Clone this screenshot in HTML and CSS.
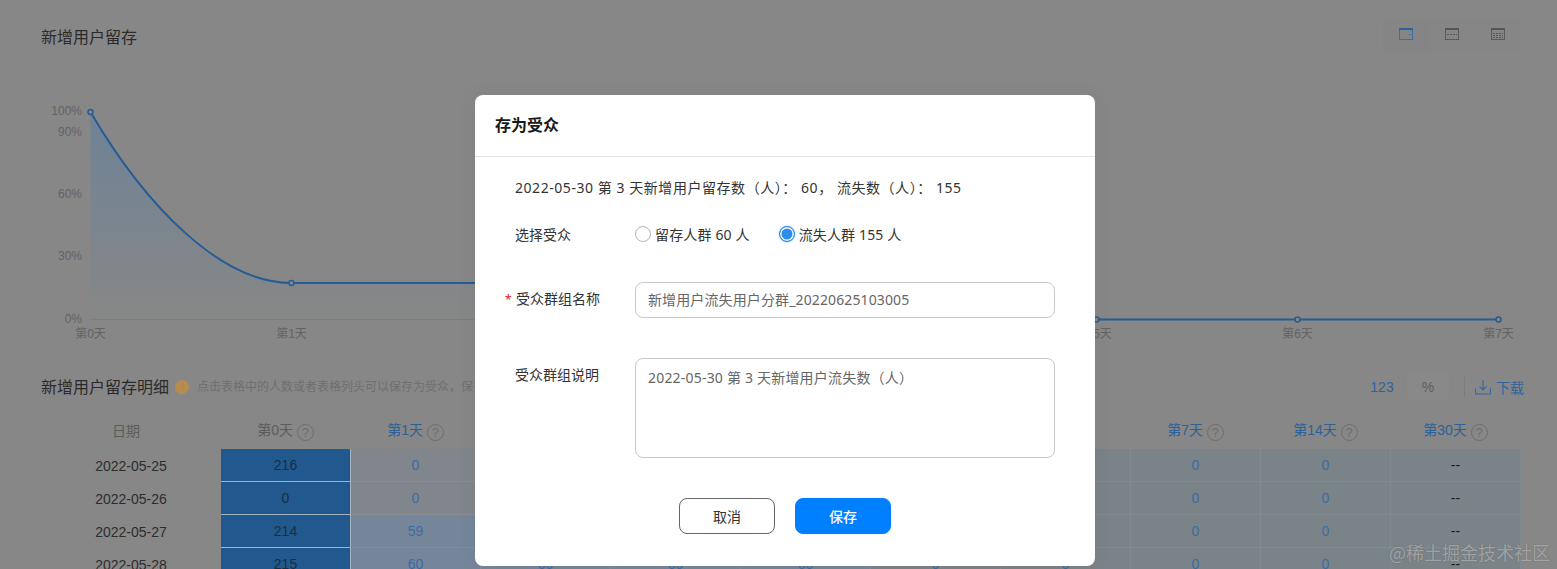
FILE: index.html
```html
<!DOCTYPE html>
<html lang="zh-CN">
<head>
<meta charset="utf-8">
<title>新增用户留存</title>
<link rel="stylesheet" href="styles.css">
</head>
<body>
<div class="page">
  <header class="head">
    <h2 class="title">新增用户留存</h2>
    <div class="periods">
      <span class="period">
        <svg width="14" height="12" viewBox="0 0 14 12"><rect x=".5" y=".5" width="13" height="11" fill="none" stroke="#3f6ea6"/><rect width="14" height="2" fill="#2a63a5"/><rect x="10" y="6" width="2" height="1" fill="#3f6ea6"/></svg>
      </span>
      <span class="period">
        <svg width="14" height="12" viewBox="0 0 14 12"><rect x=".5" y=".5" width="13" height="11" fill="none" stroke="#5a5a5a"/><rect width="14" height="2" fill="#555"/><path d="M2 6.5h10" stroke="#555" stroke-dasharray="2 1"/></svg>
      </span>
      <span class="period">
        <svg width="14" height="12" viewBox="0 0 14 12"><rect x=".5" y=".5" width="13" height="11" fill="none" stroke="#5a5a5a"/><rect width="14" height="2" fill="#555"/><path d="M2 5.5h10M2 7.5h10M2 9.5h10" stroke="#555" stroke-dasharray="2 1"/></svg>
      </span>
    </div>
  </header>

  <svg class="chart" width="1557" height="275" viewBox="0 70 1557 275">
    <defs>
      <linearGradient id="fade" x1="0" y1="0" x2="0" y2="1">
        <stop offset="0" stop-color="#6e8297"/>
        <stop offset=".9" stop-color="#858788"/>
        <stop offset="1" stop-color="#878787"/>
      </linearGradient>
    </defs>
    <path d="M90.5 112C145 205 220 283 291.5 283H480V320H90.5Z" fill="url(#fade)"/>
    <path d="M90 319.5H1500" stroke="#7d7d7d"/>
    <path d="M90.5 112C145 205 220 283 291.5 283H480" fill="none" stroke="#245c96" stroke-width="2"/>
    <path d="M1090 319.5H1498" stroke="#245c96" stroke-width="2"/>
    <g fill="#878787" stroke="#245c96" stroke-width="1.5">
      <circle cx="90.5" cy="112" r="2.5"/>
      <circle cx="291.5" cy="283" r="2.5"/>
      <circle cx="1096.5" cy="319.5" r="2.5"/>
      <circle cx="1297.5" cy="319.5" r="2.5"/>
      <circle cx="1498.5" cy="319.5" r="2.5"/>
    </g>
    <g class="axis-y" text-anchor="end">
      <text x="82" y="115">100%</text>
      <text x="82" y="136">90%</text>
      <text x="82" y="198">60%</text>
      <text x="82" y="260">30%</text>
      <text x="82" y="323">0%</text>
    </g>
    <g class="axis-x" text-anchor="middle">
      <text x="90.5" y="338">第0天</text>
      <text x="291.5" y="338">第1天</text>
      <text x="1096.5" y="338">第5天</text>
      <text x="1297.5" y="338">第6天</text>
      <text x="1498.5" y="338">第7天</text>
    </g>
  </svg>

  <div class="detail-head">
    <h2 class="title">新增用户留存明细</h2>
    <span class="info">!</span>
    <span class="hint">点击表格中的人数或者表格列头可以保存为受众，保存</span>
    <div class="tools">
      <span class="unit unit-on">123</span>
      <span class="unit unit-off">%</span>
      <span class="sep"></span>
      <svg class="dl" width="16" height="16" viewBox="0 0 16 16" fill="none" stroke="#34689f" stroke-width="1.1"><path d="M8 1v10M4.500 7.500 8 11l3.500-3.500M.6 9.500V15h14.800V9.500"/></svg>
      <span class="download">下载</span>
    </div>
  </div>

  <table class="grid">
    <colgroup><col class="c-date"><col span="10" class="c-day"></colgroup>
    <thead>
      <tr>
        <th class="th-date">日期</th>
        <th>第0天 <i class="q">?</i></th>
        <th class="link">第1天 <i class="q">?</i></th>
        <th class="link">第2天 <i class="q">?</i></th>
        <th class="link">第3天 <i class="q">?</i></th>
        <th class="link">第4天 <i class="q">?</i></th>
        <th class="link">第5天 <i class="q">?</i></th>
        <th class="link">第6天 <i class="q">?</i></th>
        <th class="link">第7天 <i class="q">?</i></th>
        <th class="link">第14天 <i class="q">?</i></th>
        <th class="link">第30天 <i class="q">?</i></th>
      </tr>
    </thead>
    <tbody>
      <tr><td class="date">2022-05-25</td><td class="h0">216</td><td class="h1">0</td><td class="h1">0</td><td class="h1">0</td><td class="h1">0</td><td class="h1">0</td><td class="h2">0</td><td class="h2">0</td><td class="h2">0</td><td class="h2 none">--</td></tr>
      <tr><td class="date">2022-05-26</td><td class="h0">0</td><td class="h1">0</td><td class="h1">0</td><td class="h1">0</td><td class="h1">0</td><td class="h1">0</td><td class="h2">0</td><td class="h2">0</td><td class="h2">0</td><td class="h2 none">--</td></tr>
      <tr><td class="date">2022-05-27</td><td class="h0">214</td><td class="h3">59</td><td class="h3">60</td><td class="h3">60</td><td class="h3">60</td><td class="h2">0</td><td class="h2">0</td><td class="h2">0</td><td class="h2">0</td><td class="h2 none">--</td></tr>
      <tr><td class="date">2022-05-28</td><td class="h0">215</td><td class="h3">60</td><td class="h3">60</td><td class="h3">60</td><td class="h3">60</td><td class="h2">0</td><td class="h2">0</td><td class="h2">0</td><td class="h2">0</td><td class="h2 none">--</td></tr>
    </tbody>
  </table>
</div>

<section class="modal">
  <h3 class="modal-title">存为受众</h3>
  <div class="modal-body">
    <p class="summary">2022-05-30 第 3 天新增用户留存数（人）： 60， 流失数（人）： 155</p>
    <div class="row row-audience">
      <span class="label">选择受众</span>
      <span class="radio"></span><span class="radio-text">留存人群 60 人</span>
      <span class="radio radio-on"></span><span class="radio-text">流失人群 155 人</span>
    </div>
    <div class="row row-name">
      <span class="label label-field label-required"><b class="star">*</b>受众群组名称</span>
      <input class="field" type="text" value="新增用户流失用户分群_20220625103005">
    </div>
    <div class="row row-desc">
      <span class="label label-field">受众群组说明</span>
      <textarea class="field area">2022-05-30 第 3 天新增用户流失数（人）</textarea>
    </div>
    <div class="actions">
      <button class="btn">取消</button>
      <button class="btn btn-primary">保存</button>
    </div>
  </div>
</section>

<div class="watermark">@稀土掘金技术社区</div>
</body>
</html>
```
FILE: styles.css
```css
* { box-sizing: border-box; }
html, body { margin: 0; height: 569px; overflow: hidden; }
body {
  background: #878787;
  color: #333;
  font: 14px "Noto Sans", "Noto Sans CJK SC", sans-serif;
  position: relative;
}
.page { width: 1557px; }

.head {
  height: 70px;
  padding: 23px 36px 0 41px;
  display: flex;
  justify-content: space-between;
  align-items: flex-start;
}
.title { margin: 0; font-size: 16px; font-weight: 400; line-height: 28px; color: #2b2b2b; }
.periods { display: flex; background: #868686; height: 32px; margin-top: -4px; border-radius: 4px; }
.period { width: 46px; height: 32px; display: flex; justify-content: center; padding-top: 9px; }
.period:first-child { background: #858585; }

.chart { display: block; }
.chart text { font: 12px "Liberation Sans", "Noto Sans CJK SC", sans-serif; fill: #636363; }

.detail-head {
  height: 70px;
  padding: 28px 33px 0 41px;
  display: flex;
  align-items: flex-start;
}
.info {
  width: 14px; height: 14px; margin: 7px 8px 0 6px;
  border-radius: 50%;
  background: #b78c4f; color: #a58560;
  font-size: 10px; line-height: 14px; text-align: center;
}
.hint { font-size: 12px; line-height: 28px; color: #6f6f6f; white-space: nowrap; }
.tools { margin-left: auto; display: flex; align-items: center; height: 28px; }
.unit { width: 42px; height: 28px; line-height: 28px; text-align: center; font-family: "Liberation Sans", sans-serif; font-size: 14px; color: #5e5e5e; }
.unit-on { color: #2f639e; margin-right: 4px; }
.unit-off { background: #898989; border-radius: 3px; }
.sep { width: 1px; height: 20px; background: #7c7c7c; margin: 0 10px 0 15px; }
.download { margin-left: 5px; color: #2f639e; font-size: 14px; }

.grid {
  margin-left: 41px;
  width: 1480px;
  table-layout: fixed;
  border-collapse: separate;
  border-spacing: 0;
  font: 14px "Liberation Sans", "Noto Sans CJK SC", sans-serif;
  text-align: center;
}
.c-date { width: 180px; }
.c-day { width: 130px; }
th { height: 34px; padding: 0 1px 4px 0; font-weight: 400; color: #5c5c5c; white-space: nowrap; }
th.link { color: #2d5f98; }
.th-date { padding-right: 10px; }
.q {
  display: inline-block;
  width: 17px; height: 17px;
  border: 1px solid #6e6e6e;
  border-radius: 50%;
  font: 13px/15px "Liberation Sans", sans-serif;
  color: #6e6e6e;
  vertical-align: -2px;
}
td { height: 33px; padding: 0; color: #3a6ba6; border-bottom: 1px solid rgba(255, 255, 255, .06); border-right: 1px solid rgba(255, 255, 255, .06); }
.date { color: #2d2d2d; border: 0; }
.h0 { background: #21598f; color: #1a2d43; border-bottom-color: #a5b2bf; border-right-color: #a5b2bf; }
.h1 { background: #80868b; }
.h2 { background: #7a8388; }
.h3 { background: #75869a; }
.none { color: #1e1e1e; }

.modal {
  position: absolute;
  left: 475px; top: 95px;
  width: 620px; height: 471px;
  background: #fff;
  border-radius: 8px;
  box-shadow: 0 0 24px rgba(0, 0, 0, .04);
}
.modal-title {
  margin: 0;
  height: 62px;
  padding-left: 20px;
  border-bottom: 1px solid #e4e4e4;
  font-size: 16px; font-weight: 700; line-height: 60px; color: #1a1a1a;
}
.modal-body { padding: 21px 40px 0; }
.summary { margin: 0; line-height: 20px; color: #333; white-space: nowrap; letter-spacing: .55px; }
.row { display: flex; }
.row-audience { margin-top: 26px; align-items: center; height: 20px; }
.row-name { margin-top: 38px; }
.row-desc { margin-top: 40px; }
.label { width: 120px; flex: none; color: #333; }
.label-field { line-height: 34px; position: relative; }
.label-required { padding-left: 1px; }
.star { position: absolute; left: -10px; top: 1px; color: #d8232a; font-size: 12px; font-weight: 400; }
.radio {
  width: 16px; height: 16px; flex: none;
  border: 1px solid #b5b5b5; border-radius: 50%;
  background: #fff;
}
.radio-on { border-color: #2e8ceb; background: #2e8ceb; box-shadow: inset 0 0 0 1.500px #fff, 0 0 2px rgba(46, 140, 235, .5); }
.radio-text { margin: 0 29px 0 4px; color: #333; white-space: nowrap; letter-spacing: .15px; }
.field {
  width: 420px; height: 36px;
  padding: 0 12px 2px;
  border: 1px solid #c9c9c9; border-radius: 8px;
  font: 14px "Noto Sans", "Noto Sans CJK SC", sans-serif;
  letter-spacing: .12px;
  color: #666;
  background: #fff;
  outline: 0;
}
.area { height: 100px; padding-top: 9px; line-height: 20px; letter-spacing: .2px; resize: none; }
.actions { margin-top: 40px; display: flex; justify-content: center; gap: 20px; }
.btn {
  width: 96px; height: 36px;
  border: 1px solid #666; border-radius: 8px;
  background: #fff; color: #333;
  font: 14px "Noto Sans", "Noto Sans CJK SC", sans-serif;
}
.btn-primary { background: #007fff; border-color: #007fff; color: #fff; font-weight: 500; }

.watermark {
  position: absolute;
  right: 7px; top: 540px;
  font: 18px/24px "Noto Sans CJK SC", sans-serif;
  color: rgba(235, 235, 235, .5);
  text-shadow: 0 0 1px rgba(50, 50, 50, .6);
}
```
